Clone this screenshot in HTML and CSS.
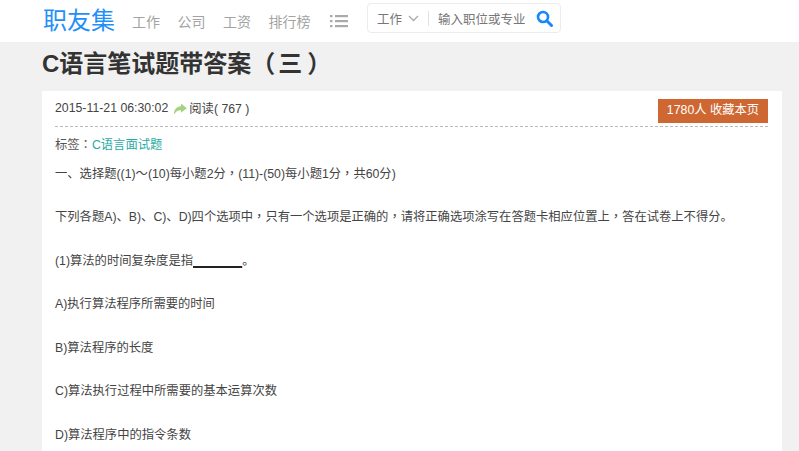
FILE: index.html
```html
<!DOCTYPE html>
<html lang="zh-CN">
<head>
<meta charset="utf-8">
<title>C语言笔试题带答案（三）</title>
<link rel="stylesheet" href="styles.css">
</head>
<body>
<header class="topbar">
  <div class="logo">职友集</div>
  <nav class="nav">
    <a>工作</a><a>公司</a><a>工资</a><a>排行榜</a>
    <svg class="menu-icon" width="18" height="14" viewBox="0 0 18 14"><g fill="#aaa"><rect x="0" y="1" width="2.5" height="2.2"/><rect x="5" y="1" width="13" height="2.2"/><rect x="0" y="6" width="2.5" height="2.2"/><rect x="5" y="6" width="13" height="2.2"/><rect x="0" y="11" width="2.5" height="2.2"/><rect x="5" y="11" width="13" height="2.2"/></g></svg>
  </nav>
  <div class="search">
    <span class="search-type">工作</span>
    <svg class="chev" width="11" height="7" viewBox="0 0 11 7"><path d="M1 1l4.500 4.500L10 1" fill="none" stroke="#aaa" stroke-width="1.300"/></svg>
    <span class="sep"></span>
    <span class="placeholder">输入职位或专业</span>
    <svg class="glass" width="17" height="17" viewBox="0 0 17 17"><circle cx="7" cy="7" r="5" fill="none" stroke="#1787fb" stroke-width="2.600"/><path d="M10.800 10.800L15.500 15.500" stroke="#1787fb" stroke-width="3" stroke-linecap="round"/></svg>
  </div>
</header>
<main class="page">
  <h1 class="title">C语言笔试题带答案（<span class="three">三</span>）</h1>
  <article class="card">
    <div class="meta">
      <div class="meta-left">
        <span>2015-11-21 06:30:02</span>
        <svg class="share" width="14" height="12" viewBox="0 0 14 12"><path d="M8 0.500L13.800 5.300 8 9.800V7.200C5 7 2.800 8.300 1 11.500 0.800 6.800 3.500 3.500 8 3.200Z" fill="#a5d27f"/></svg>
        <span>阅读( 767 )</span>
      </div>
      <a class="fav">1780人 收藏本页</a>
    </div>
    <div class="tags">标签<span class="cp" lang="zh-TW">：</span><a class="tag">C语言面试题</a></div>
    <div class="content">
      <p>一、选择题((1)～(10)每小题2分<span class="cp" lang="zh-TW">，</span>(11)-(50)每小题1分<span class="cp" lang="zh-TW">，</span>共60分)</p>
      <p>下列各题A)、B)、C)、D)四个选项中<span class="cp" lang="zh-TW">，</span>只有一个选项是正确的<span class="cp" lang="zh-TW">，</span>请将正确选项涂写在答题卡相应位置上<span class="cp" lang="zh-TW">，</span>答在试卷上不得分。</p>
      <p>(1)算法的时间复杂度是指<u class="blank">　　　　</u>。</p>
      <p>A)执行算法程序所需要的时间</p>
      <p>B)算法程序的长度</p>
      <p>C)算法执行过程中所需要的基本运算次数</p>
      <p>D)算法程序中的指令条数</p>
    </div>
  </article>
</main>
</body>
</html>
```

FILE: styles.css
```css
* { box-sizing: border-box; }
html, body { margin: 0; padding: 0; }
body {
  height: 451px;
  overflow: hidden;
  background: #f1f1f1;
  color: #444;
  font-family: "Liberation Sans", "Noto Sans CJK SC", sans-serif;
  font-size: 12.300px;
}
.topbar {
  height: 42px;
  background: #fff;
  display: flex;
  align-items: center;
  padding-left: 43px;
}
.logo {
  width: 72px;
  color: #1f8ffa;
  font-size: 24px;
  line-height: 34px;
  white-space: nowrap;
}
.nav {
  display: flex;
  align-items: center;
  margin-left: 17px;
  color: #a3a3a3;
  font-size: 14px;
}
.nav a { margin-right: 17.500px; }
.nav a:last-of-type { margin-right: 19.500px; }
.menu-icon { display: block; }
.search {
  margin-left: 19px;
  align-self: flex-start;
  margin-top: 3px;
  width: 194px;
  height: 30px;
  border: 1px solid #ececec;
  border-radius: 4px;
  display: flex;
  align-items: center;
  padding-left: 9px;
  font-size: 12.500px;
  color: #777;
}
.chev { margin-left: 6px; }
.sep { width: 1px; height: 15px; background: #e2e2e2; margin: 0 9px 0 9px; }
.placeholder { color: #777; width: 87px; overflow: hidden; white-space: nowrap; }
.glass { margin-left: 11px; }
.page { width: 740px; margin-left: 42px; }
.title {
  margin: 0;
  height: 49px;
  font-size: 24px;
  line-height: 44px;
  color: #333;
  font-weight: bold;
}
.three { margin: 0 5px 0 3px; }
.card {
  background: #fff;
  padding: 8px 14px 0 13px;
  height: 360px;
}
.meta {
  display: flex;
  justify-content: space-between;
  height: 28px;
  border-bottom: 1px dashed #bbb;
}
.meta-left { display: flex; align-items: center; height: 18px; color: #444; }
.share { margin: 2px 2px 0 5px; }
.fav {
  width: 110px;
  height: 24px;
  background: #cf6733;
  color: #fff;
  text-align: center;
  line-height: 23px;
}
.tags { margin-top: 8px; height: 20px; line-height: 20px; color: #555; }
.tag { color: #28aba3; }
.cp { font-family: "Noto Sans CJK TC", sans-serif; line-height: 1; }
.content { margin-top: 9.500px; }
.content p { margin: 0 0 24px; line-height: 19.500px; color: #444; }
.blank { color: #222; text-decoration-thickness: 1.500px; }
```
